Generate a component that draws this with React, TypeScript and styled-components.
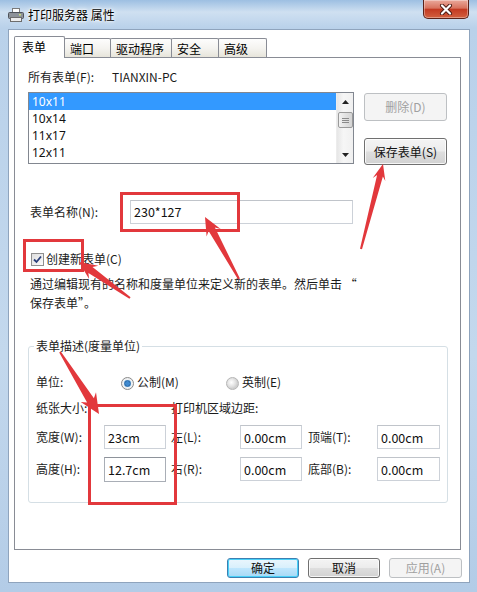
import React from "react";
import styled, { createGlobalStyle } from "styled-components";

const FONT = `"Noto Sans CJK SC", "Microsoft YaHei", sans-serif`;

const Global = createGlobalStyle`
  html, body { margin: 0; padding: 0; }
  body { background: #bdd4eb; font-family: ${FONT}; font-size: 12px; color: #1b1b1b; }
  * { box-sizing: border-box; }
`;

const Window = styled.div`
  position: relative;
  width: 477px;
  height: 592px;
  overflow: hidden;
  display: flex;
  flex-direction: column;
  background: linear-gradient(180deg, #9dbfe2 0px, #cfe0f1 12px, #b9d1ea 28px, #c3d8ed 60%, #b3cce7 100%);
`;

const TitleBar = styled.div`
  height: 29px;
  flex: none;
  display: flex;
  align-items: flex-start;
  padding-left: 8px;
`;

const TitleIcon = styled.svg`
  flex: none;
  margin-top: 7px;
`;

const TitleText = styled.div`
  margin-left: 4px;
  margin-top: 7px;
  line-height: 16px;
  font-size: 12px;
  color: #000;
  text-shadow: 0 0 6px #fff, 0 0 3px #fff, 0 0 2px #fff;
`;

const CloseButton = styled.div`
  margin-left: auto;
  margin-right: 8px;
  width: 46px;
  height: 19px;
  border: 1px solid #5b2219;
  border-top: none;
  border-radius: 0 0 5px 5px;
  background: linear-gradient(180deg, #eaa99b 0%, #d8735e 45%, #c33a22 52%, #d2603f 100%);
  box-shadow: inset 0 0 0 1px rgba(255, 255, 255, 0.35);
  display: flex;
  align-items: center;
  justify-content: center;
`;

const Client = styled.div`
  flex: 1;
  margin: 0 7px 9px 8px;
  background: #fff;
  border: 1px solid #8fa4bd;
  display: flex;
  flex-direction: column;
  padding: 6px 0 0 5px;
`;

const TabStrip = styled.div`
  display: flex;
  align-items: flex-end;
  height: 22px;
  margin-bottom: -1px;
`;

const Tab = styled.div<{ $active?: boolean; $w: number }>`
  position: relative;
  z-index: ${(p) => (p.$active ? 2 : 0)};
  width: ${(p) => p.$w}px;
  height: ${(p) => (p.$active ? 22 : 20)}px;
  margin-left: -1px;
  &:first-child { margin-left: 0; }
  padding: 2px 0 0 ${(p) => (p.$active ? 7 : 5)}px;
  line-height: 16px;
  font-size: 12px;
  color: #000;
  border: 1px solid #898c95;
  border-bottom: none;
  border-radius: 2px 2px 0 0;
  background: ${(p) =>
    p.$active ? "#fff" : "linear-gradient(180deg, #fdfdfd 0%, #f4f3ef 50%, #e5e3d8 100%)"};
`;

const Panel = styled.div`
  position: relative;
  z-index: 1;
  width: 447px;
  height: 493px;
  border: 1px solid #898c95;
  background: transparent;
  display: flex;
  flex-direction: column;
  padding-left: 13px;
`;

const Row = styled.div<{ $mt: number; $h?: number }>`
  display: flex;
  align-items: center;
  margin-top: ${(p) => p.$mt}px;
  ${(p) => (p.$h ? `height: ${p.$h}px;` : "")}
  line-height: 16px;
`;

const TopRow = styled.div`
  display: flex;
  align-items: flex-start;
  margin-top: 7px;
`;

const Label = styled.span<{ $w?: number; $ml?: number }>`
  display: inline-block;
  flex: none;
  ${(p) => (p.$w ? `width: ${p.$w}px;` : "")}
  margin-left: ${(p) => p.$ml ?? 0}px;
  line-height: 16px;
  white-space: nowrap;
  color: #1b1b1b;
`;

const ListBox = styled.div`
  width: 326px;
  height: 72px;
  border: 1px solid #828790;
  display: flex;
  background: #fff;
`;

const ListItems = styled.div`
  flex: 1;
  display: flex;
  flex-direction: column;
`;

const ListItem = styled.div<{ $selected?: boolean }>`
  height: 17px;
  line-height: 17px;
  padding-left: 3px;
  font-family: "Noto Sans", "Open Sans", sans-serif;
  font-size: 12px;
  color: ${(p) => (p.$selected ? "#fff" : "#111")};
  background: ${(p) => (p.$selected ? "#3399ff" : "transparent")};
`;

const ScrollBar = styled.div`
  width: 17px;
  display: flex;
  flex-direction: column;
  align-items: center;
  background: linear-gradient(90deg, #e6e6e6, #f6f6f6 40%, #f0f0f0);
  border-left: 1px solid #ececec;
`;

const ScrollArrow = styled.div`
  height: 17px;
  width: 100%;
  display: flex;
  align-items: center;
  justify-content: center;
`;

const ScrollThumb = styled.div`
  margin-top: 2px;
  width: 15px;
  height: 16px;
  border: 1px solid #9a9a9a;
  border-radius: 2px;
  background: linear-gradient(90deg, #f2f2f2, #e2e2e2 50%, #d4d4d4);
  display: flex;
  flex-direction: column;
  align-items: center;
  justify-content: center;
  gap: 1px;
`;

const Grip = styled.span`
  width: 7px;
  height: 1px;
  background: #8a8a8a;
`;

const Spacer = styled.div`
  flex: 1;
`;

const SideButtons = styled.div`
  margin-left: 10px;
  width: 83px;
  display: flex;
  flex-direction: column;
`;

const Button = styled.button<{
  $w?: number;
  $h: number;
  $mt?: number;
  $variant?: "normal" | "disabled" | "default";
}>`
  font-family: ${FONT};
  font-size: 12px;
  line-height: 14px;
  padding: 0;
  width: ${(p) => (p.$w ? `${p.$w}px` : "100%")};
  height: ${(p) => p.$h}px;
  margin-top: ${(p) => p.$mt ?? 0}px;
  border-radius: 3px;
  cursor: default;
  border: 1px solid
    ${(p) => (p.$variant === "disabled" ? "#bdc0c3" : p.$variant === "default" ? "#3c7fb1" : "#707070")};
  color: ${(p) => (p.$variant === "disabled" ? "#a0a0a0" : "#111")};
  background: ${(p) =>
    p.$variant === "disabled"
      ? "#f4f4f4"
      : p.$variant === "default"
      ? "linear-gradient(180deg, #eaf6fd 0%, #d9f0fc 48%, #bee6fd 52%, #a7d9f5 100%)"
      : "linear-gradient(180deg, #f4f4f4 0%, #ececec 48%, #dedede 52%, #d2d2d2 100%)"};
  box-shadow: ${(p) =>
    p.$variant === "default"
      ? "inset 0 0 0 1px #48d0f8"
      : p.$variant === "disabled"
      ? "none"
      : "inset 0 0 0 1px rgba(255,255,255,0.8)"};
`;

const TextInput = styled.div<{ $w: number; $h: number; $focus?: boolean }>`
  width: ${(p) => p.$w}px;
  height: ${(p) => p.$h}px;
  border: 1px solid ${(p) => (p.$focus ? "#a9aeb6" : "#ccd1d8")};
  border-top-color: ${(p) => (p.$focus ? "#8e939b" : "#c0c4ca")};
  padding-left: 3px;
  display: flex;
  align-items: center;
  font-size: 12.5px;
  color: #111;
  background: #fff;
`;

const CheckBox = styled.span`
  width: 13px;
  height: 13px;
  margin-left: 3px;
  border: 1px solid #8f8f8f;
  background: linear-gradient(135deg, #dedede, #fbfbfb);
  display: flex;
  align-items: center;
  justify-content: center;
  flex: none;
`;

const Desc = styled.div`
  margin-top: 7px;
  padding-left: 2px;
  line-height: 19px;
  color: #1b1b1b;
`;

const Group = styled.fieldset`
  margin: 26px 0 0 0;
  width: 420px;
  height: 165px;
  border: 1px solid #d5dfe5;
  border-radius: 3px;
  padding: 0 0 0 7px;
  display: flex;
  flex-direction: column;
`;

const Legend = styled.legend`
  padding: 0 2px;
  margin-left: -2px;
  line-height: 16px;
  color: #1b1b1b;
`;

const RadioItem = styled.span<{ $w?: number }>`
  display: inline-flex;
  align-items: center;
  ${(p) => (p.$w ? `width: ${p.$w}px;` : "")}
  flex: none;
`;

const Radio = styled.span<{ $checked?: boolean }>`
  width: 13px;
  height: 13px;
  border-radius: 50%;
  border: 1px solid ${(p) => (p.$checked ? "#8a8a8a" : "#b5b5b5")};
  background: ${(p) =>
    p.$checked
      ? "radial-gradient(circle at 50% 50%, #3f8ad0 0 2px, #1d5a9a 2.6px, #8fc0e6 3.6px, #eef0f2 4px)"
      : "radial-gradient(circle at 40% 40%, #ffffff 0, #e2e2e2 4px, #cfcfcf 6px)"};
  margin-right: 3px;
  margin-top: 2px;
  flex: none;
`;

const SizeGrid = styled.div`
  margin-top: 9px;
  display: grid;
  grid-template-columns: 68px 62px 74px 62px 75px 63px;
  grid-auto-rows: 24px;
  row-gap: 8px;
  align-items: center;
`;

const GridLabel = styled.span<{ $indent?: number }>`
  padding-left: ${(p) => p.$indent ?? 0}px;
  line-height: 16px;
  white-space: nowrap;
`;

const Footer = styled.div`
  display: flex;
  justify-content: flex-end;
  gap: 9px;
  margin-top: 8px;
  padding-right: 7px;
`;

const Overlay = styled.svg`
  position: absolute;
  left: 0;
  top: 0;
  pointer-events: none;
  z-index: 10;
`;

const RED = "#e2383c";

function arrowPoints(tx: number, ty: number, hx: number, hy: number, hw = 8, hl = 18, sw = 3.6) {
  const dx = hx - tx;
  const dy = hy - ty;
  const len = Math.hypot(dx, dy);
  const ux = dx / len;
  const uy = dy / len;
  const nx = -uy;
  const ny = ux;
  const bx = hx - ux * hl;
  const by = hy - uy * hl;
  const pts: [number, number][] = [
    [tx + nx * 1, ty + ny * 1],
    [bx + nx * sw + ux * 4, by + ny * sw + uy * 4],
    [bx + nx * hw, by + ny * hw],
    [hx, hy],
    [bx - nx * hw, by - ny * hw],
    [bx - nx * sw + ux * 4, by - ny * sw + uy * 4],
    [tx - nx * 1, ty - ny * 1],
  ];
  return pts.map((p) => `${p[0].toFixed(1)},${p[1].toFixed(1)}`).join(" ");
}

const Triangle: React.FC<{ up?: boolean }> = ({ up }) => (
  <svg width="7" height="4" viewBox="0 0 7 4">
    <polygon points={up ? "3.5,0 7,4 0,4" : "0,0 7,0 3.5,4"} fill="#222" />
  </svg>
);

export default function App() {
  return (
    <>
      <Global />
      <Window>
        <TitleBar>
          <TitleIcon width="16" height="16" viewBox="0 0 16 16">
            <rect x="4.5" y="1.5" width="7" height="5" fill="#fff" stroke="#7a7a7a" />
            <rect x="0.5" y="5.5" width="15" height="6" rx="1" fill="#8d9299" stroke="#4e535a" />
            <rect x="2.5" y="10.5" width="11" height="4" fill="#ededed" stroke="#6d6d6d" />
            <rect x="11" y="7" width="2" height="1.5" fill="#c9e07a" />
          </TitleIcon>
          <TitleText>打印服务器 属性</TitleText>
          <CloseButton>
            <svg width="14" height="11" viewBox="0 0 14 11">
              <path d="M3 1.5 L11 9.5 M11 1.5 L3 9.5" stroke="#4a1a12" strokeWidth="4" strokeLinecap="round" />
              <path d="M3 1.5 L11 9.5 M11 1.5 L3 9.5" stroke="#fff" strokeWidth="2.2" strokeLinecap="round" />
            </svg>
          </CloseButton>
        </TitleBar>

        <Client>
          <TabStrip>
            <Tab $active $w={51}>表单</Tab>
            <Tab $w={47}>端口</Tab>
            <Tab $w={62}>驱动程序</Tab>
            <Tab $w={48}>安全</Tab>
            <Tab $w={49}>高级</Tab>
          </TabStrip>

          <Panel>
            <Row $mt={11} $h={16}>
              <Label $w={84}>所有表单(F):</Label>
              <Label>TIANXIN-PC</Label>
            </Row>

            <TopRow>
              <ListBox>
                <ListItems>
                  <ListItem $selected>10x11</ListItem>
                  <ListItem>10x14</ListItem>
                  <ListItem>11x17</ListItem>
                  <ListItem>12x11</ListItem>
                </ListItems>
                <ScrollBar>
                  <ScrollArrow>
                    <Triangle up />
                  </ScrollArrow>
                  <ScrollThumb>
                    <Grip />
                    <Grip />
                    <Grip />
                  </ScrollThumb>
                  <Spacer />
                  <ScrollArrow>
                    <Triangle />
                  </ScrollArrow>
                </ScrollBar>
              </ListBox>
              <SideButtons>
                <Button $h={28} $mt={1} $variant="disabled">删除(D)</Button>
                <Button $h={27} $mt={17}>保存表单(S)</Button>
              </SideButtons>
            </TopRow>

            <Row $mt={35}>
              <Label $w={100} $ml={2}>表单名称(N):</Label>
              <TextInput $w={223} $h={24}>230*127</TextInput>
            </Row>

            <Row $mt={27} $h={16}>
              <CheckBox>
                <svg width="9" height="9" viewBox="0 0 9 9">
                  <path d="M1 4.5 L3.5 7 L8 1.5" fill="none" stroke="#2a3f7a" strokeWidth="1.8" />
                </svg>
              </CheckBox>
              <Label $ml={2}>创建新表单(C)</Label>
            </Row>

            <Desc>
              通过编辑现有的名称和度量单位来定义新的表单。然后单击 “
              <br />
              保存表单”。
            </Desc>

            <Group>
              <Legend>表单描述(度量单位)</Legend>
              <Row $mt={20} $h={16}>
                <Label $w={85}>单位:</Label>
                <RadioItem $w={105}>
                  <Radio $checked />
                  公制(M)
                </RadioItem>
                <RadioItem>
                  <Radio />
                  英制(E)
                </RadioItem>
              </Row>
              <Row $mt={10} $h={16}>
                <Label $w={135}>纸张大小:</Label>
                <Label>打印机区域边距:</Label>
              </Row>
              <SizeGrid>
                <GridLabel>宽度(W):</GridLabel>
                <TextInput $w={62} $h={24}>23cm</TextInput>
                <GridLabel $indent={5}>左(L):</GridLabel>
                <TextInput $w={62} $h={24}>0.00cm</TextInput>
                <GridLabel $indent={6}>顶端(T):</GridLabel>
                <TextInput $w={63} $h={24}>0.00cm</TextInput>

                <GridLabel>高度(H):</GridLabel>
                <TextInput $w={62} $h={25} $focus>12.7cm</TextInput>
                <GridLabel $indent={5}>右(R):</GridLabel>
                <TextInput $w={62} $h={24}>0.00cm</TextInput>
                <GridLabel $indent={6}>底部(B):</GridLabel>
                <TextInput $w={63} $h={24}>0.00cm</TextInput>
              </SizeGrid>
            </Group>
          </Panel>

          <Footer>
            <Button $w={72} $h={20} $variant="default">确定</Button>
            <Button $w={72} $h={20}>取消</Button>
            <Button $w={73} $h={20} $variant="disabled">应用(A)</Button>
          </Footer>
        </Client>

        <Overlay width="477" height="592" viewBox="0 0 477 592">
          <rect x="121.5" y="193.5" width="117" height="37" fill="none" stroke={RED} strokeWidth="3" />
          <rect x="24.5" y="240.5" width="58" height="30" fill="none" stroke={RED} strokeWidth="3" />
          <rect x="89.5" y="405.5" width="86" height="98" fill="none" stroke={RED} strokeWidth="3" />
          <polygon points={arrowPoints(239, 279, 205, 217)} fill={RED} />
          <polygon points={arrowPoints(361, 249, 383, 164, 6.5, 16, 3)} fill={RED} />
          <polygon points={arrowPoints(130, 298, 79, 262)} fill={RED} />
          <polygon points={arrowPoints(60, 352, 99, 414, 9, 20, 4)} fill={RED} />
        </Overlay>
      </Window>
    </>
  );
}
